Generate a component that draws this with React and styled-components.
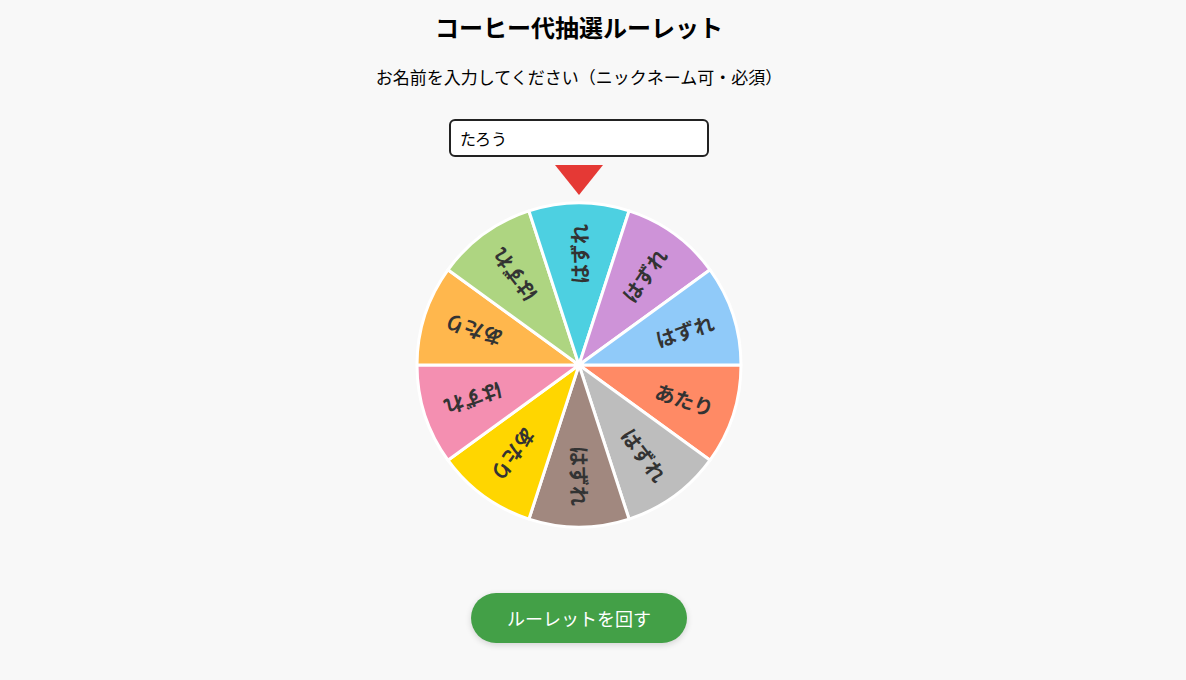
import React from 'react';
import styled, { createGlobalStyle } from 'styled-components';

const GlobalStyle = createGlobalStyle`
    body {
        margin: 0;
        background: #f8f8f8;
        font-family: "Noto Sans CJK JP", "Noto Sans", sans-serif;
        color: #000;
    }
`;

const Page = styled.div`
    display: flex;
    flex-direction: column;
    align-items: center;
    padding: 11px 28px 0 0;
    height: 669px;
`;

const Title = styled.h1`
    margin: 0;
    font-size: 24px;
    line-height: 32px;
    font-weight: 700;
`;

const Prompt = styled.p`
    margin: 22px 0 0;
    font-size: 17px;
    line-height: 24px;
`;

const NameInput = styled.input`
    margin-top: 30px;
    width: 260px;
    height: 38px;
    box-sizing: border-box;
    border: 2px solid #222;
    border-radius: 6px;
    padding: 0 9px;
    font-family: inherit;
    font-size: 16px;
    color: #000;
    background: #fff;
    &:focus {
        outline: none;
    }
`;

const Pointer = styled.div`
    margin-top: 8px;
    width: 0;
    height: 0;
    border-left: 24px solid transparent;
    border-right: 24px solid transparent;
    border-top: 30px solid #e53935;
`;

const WheelSvg = styled.svg`
    display: block;
    margin-top: 5px;
    width: 330px;
    height: 330px;
`;

const SectorLabel = styled.text`
    font-family: "Noto Sans CJK JP", sans-serif;
    font-size: 20px;
    font-weight: 700;
    fill: #333;
`;

const SpinButton = styled.button`
    margin-top: 63px;
    width: 216px;
    height: 50px;
    border: none;
    border-radius: 25px;
    background: #43a047;
    color: #fff;
    font-family: inherit;
    font-size: 18px;
    box-shadow: 0 2px 6px rgba(0, 0, 0, 0.15);
    cursor: pointer;
`;

const sectors = [
    { label: 'あたり', color: '#ff8a65' },
    { label: 'はずれ', color: '#bdbdbd' },
    { label: 'はずれ', color: '#a1887f' },
    { label: 'あたり', color: '#ffd600' },
    { label: 'はずれ', color: '#f48fb1' },
    { label: 'あたり', color: '#ffb74d' },
    { label: 'はずれ', color: '#aed581' },
    { label: 'はずれ', color: '#4dd0e1' },
    { label: 'はずれ', color: '#ce93d8' },
    { label: 'はずれ', color: '#90caf9' },
];

const C = 165;
const R = 162;

function sectorPath(i, n) {
    const a0 = (i * 2 * Math.PI) / n;
    const a1 = ((i + 1) * 2 * Math.PI) / n;
    const x0 = C + R * Math.cos(a0), y0 = C + R * Math.sin(a0);
    const x1 = C + R * Math.cos(a1), y1 = C + R * Math.sin(a1);
    return `M${C},${C} L${x0},${y0} A${R},${R} 0 0 1 ${x1},${y1} Z`;
}

function Wheel() {
    const n = sectors.length;
    return (
        <WheelSvg viewBox="0 0 330 330">
            {sectors.map((s, i) => (
                <path key={'p' + i} d={sectorPath(i, n)} fill={s.color} stroke="#fff" strokeWidth="3" strokeLinejoin="round" />
            ))}
            {sectors.map((s, i) => {
                const mid = (i + 0.5) * (360 / n);
                return (
                    <g key={'t' + i} transform={`rotate(${mid} ${C} ${C})`}>
                        <SectorLabel x={C + 141} y={C} textAnchor="end" dominantBaseline="central">
                            {s.label}
                        </SectorLabel>
                    </g>
                );
            })}
        </WheelSvg>
    );
}

export default function App() {
    return (
        <>
            <GlobalStyle />
            <Page>
                <Title>コーヒー代抽選ルーレット</Title>
                <Prompt>お名前を入力してください（ニックネーム可・必須）</Prompt>
                <NameInput type="text" defaultValue="たろう" autoFocus />
                <Pointer />
                <Wheel />
                <SpinButton>ルーレットを回す</SpinButton>
            </Page>
        </>
    );
}
